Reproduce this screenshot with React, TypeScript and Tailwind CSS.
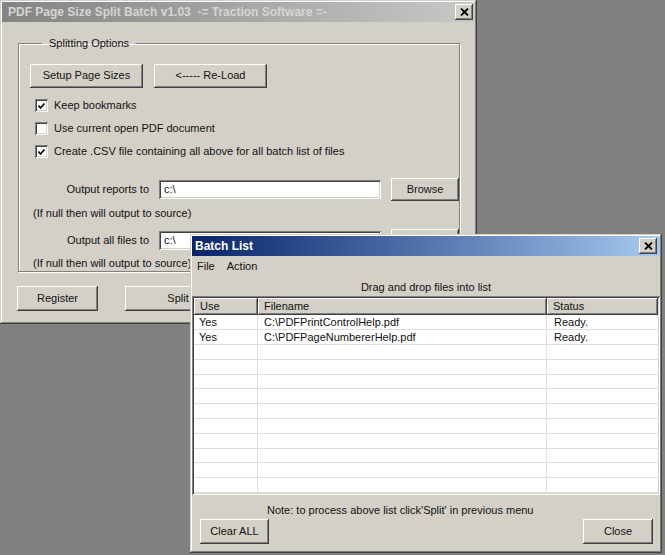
import React from 'react';

const raised =
  'shadow-[inset_-1px_-1px_#404040,inset_1px_1px_#ffffff,inset_-2px_-2px_#808080]';
const sunken =
  'shadow-[inset_1px_1px_#808080,inset_-1px_-1px_#ffffff,inset_2px_2px_#404040,inset_-2px_-2px_#d4d0c8]';

function Btn({ children, className }: { children: React.ReactNode; className?: string }) {
  return (
    <button
      type="button"
      className={`flex shrink-0 items-center justify-center bg-[#d4d0c8] text-[11px] text-[#111] ${raised} ${className ?? ''}`}
    >
      {children}
    </button>
  );
}

function CloseBox() {
  return (
    <div className={`flex h-[16px] w-[18px] items-center justify-center bg-[#d4d0c8] ${raised}`}>
      <svg width="9" height="8" viewBox="0 0 9 8">
        <path d="M1 0.5 L8 7.5 M8 0.5 L1 7.5" stroke="#000" strokeWidth="1.8" />
      </svg>
    </div>
  );
}

function Check({ checked, label }: { checked?: boolean; label: string }) {
  return (
    <div className="flex h-[22px] items-center gap-[6px]">
      <span className={`flex h-[13px] w-[13px] items-center justify-center bg-white ${sunken}`}>
        {checked && (
          <svg width="9" height="8" viewBox="0 0 9 8">
            <polyline points="1.5,3.5 3.5,6 7.5,1.5" fill="none" stroke="#000" strokeWidth="1.7" />
          </svg>
        )}
      </span>
      <span>{label}</span>
    </div>
  );
}

function PathRow({ label, value }: { label: string; value: string }) {
  return (
    <div className="flex h-[22px] items-center">
      <span className="w-[119px] shrink-0 text-right">{label}</span>
      <div className={`ml-[10px] flex h-[19px] w-[222px] shrink-0 items-center bg-white pl-[5px] ${sunken}`}>
        {value}
      </div>
      <Btn className="ml-[10px] h-[23px] w-[68px]">Browse</Btn>
    </div>
  );
}

function SplitWindow() {
  return (
    <div className="absolute left-0 top-0 flex h-[324px] w-[477px] flex-col bg-[#d4d0c8] p-[2px] shadow-[inset_-1px_-1px_#404040,inset_1px_1px_#d4d0c8,inset_-2px_-2px_#808080,inset_2px_2px_#ffffff]">
      <div className="flex h-[20px] items-center justify-between bg-gradient-to-r from-[#848484] to-[#c8c8c8] pl-[6px] pr-[2px]">
        <span className="text-[12px] font-bold text-[#d8d6d0]">
          PDF Page Size Split Batch v1.03&nbsp;&nbsp;-= Traction Software =-
        </span>
        <CloseBox />
      </div>

      <div className="flex flex-col px-[16px] pt-[13px]">
        <fieldset className="h-[237px] border border-[#808080] pl-[11px] shadow-[1px_1px_0_#ffffff,inset_1px_1px_0_#ffffff]">
          <legend className="ml-[12px] px-[7px] text-[11px]">Splitting Options</legend>

          <div className="mt-[12px] flex gap-[11px]">
            <Btn className="h-[24px] w-[113px]">Setup Page Sizes</Btn>
            <Btn className="h-[24px] w-[113px]">&lt;----- Re-Load</Btn>
          </div>

          <div className="mt-[7px] flex flex-col gap-[1px] pl-[5px]">
            <Check checked label="Keep bookmarks" />
            <Check label="Use current open PDF document" />
            <Check checked label="Create .CSV file containing all above for all batch list of files" />
          </div>

          <div className="mt-[16px]">
            <PathRow label="Output reports to" value="c:\" />
          </div>
          <div className="mt-[2px] h-[20px] leading-[20px] pl-[3px]">(If null then will output to source)</div>

          <div className="mt-[7px]">
            <PathRow label="Output all files to" value="c:\" />
          </div>
          <div className="mt-[1px] h-[20px] leading-[20px] pl-[3px]">(If null then will output to source)</div>
        </fieldset>

        <div className="mt-[14px] -ml-[1px] flex gap-[27px]">
          <Btn className="h-[25px] w-[81px]">Register</Btn>
          <Btn className="h-[25px] w-[106px]">Split</Btn>
        </div>
      </div>
    </div>
  );
}

const files = [
  { use: 'Yes', name: 'C:\\PDFPrintControlHelp.pdf', status: 'Ready.' },
  { use: 'Yes', name: 'C:\\PDFPageNumbererHelp.pdf', status: 'Ready.' },
];

function BatchWindow() {
  const rows = [...files, ...Array.from({ length: 10 }, () => ({ use: '', name: '', status: '' }))];
  return (
    <div className="absolute left-[190px] top-[234px] flex h-[319px] w-[472px] flex-col bg-[#d4d0c8] p-[2px] shadow-[inset_-1px_-1px_#404040,inset_1px_1px_#d4d0c8,inset_-2px_-2px_#808080,inset_2px_2px_#ffffff]">
      <div className="flex h-[20px] items-center justify-between bg-gradient-to-r from-[#0a246a] to-[#a6caf0] pl-[3px] pr-[3px]">
        <span className="text-[12px] font-bold text-white">Batch List</span>
        <CloseBox />
      </div>

      <div className="flex h-[20px] items-center gap-[12px] pl-[5px] pt-[1px]">
        <span>File</span>
        <span>Action</span>
      </div>

      <div className="mt-[1px] h-[19px] text-center leading-[20px]">Drag and drop files into list</div>

      <div className={`flex h-[199px] flex-col bg-white p-[2px] ${sunken}`}>
        <div className="grid h-[17px] grid-cols-[64px_289px_1fr]">
          <div className={`bg-[#d4d0c8] pl-[6px] leading-[17px] ${raised}`}>Use</div>
          <div className={`bg-[#d4d0c8] pl-[6px] leading-[17px] ${raised}`}>Filename</div>
          <div className={`bg-[#d4d0c8] pl-[6px] leading-[17px] ${raised}`}>Status</div>
        </div>
        {rows.map((r, i) => (
          <div key={i} className="grid h-[15px] grid-cols-[64px_289px_1fr] border-b border-[#dedede]">
            <div className="border-r border-[#dedede] pl-[5px] leading-[14px]">{r.use}</div>
            <div className="border-r border-[#dedede] pl-[6px] leading-[14px]">{r.name}</div>
            <div className="pl-[7px] leading-[14px]">{r.status}</div>
          </div>
        ))}
      </div>

      <div className="mt-[6px] h-[18px] pl-[75px] leading-[18px]">
        Note: to process above list click'Split' in previous menu
      </div>
      <div className="flex justify-between pl-[8px] pr-[7px]">
        <Btn className="h-[25px] w-[69px]">Clear ALL</Btn>
        <Btn className="h-[25px] w-[70px]">Close</Btn>
      </div>
    </div>
  );
}

export default function App() {
  return (
    <div className="relative h-[555px] w-[665px] overflow-hidden bg-[#808080] font-['Liberation_Sans',Arial,sans-serif] text-[11px] text-[#111]">
      <SplitWindow />
      <BatchWindow />
    </div>
  );
}
